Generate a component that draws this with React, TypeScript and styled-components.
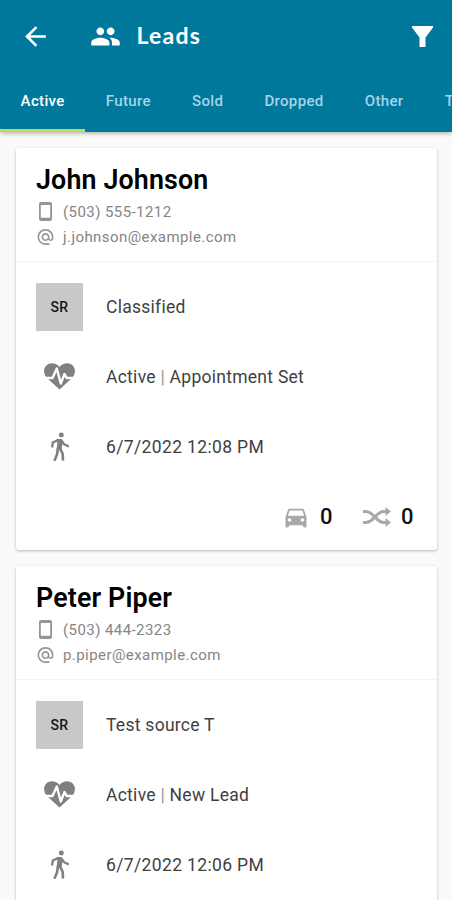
import React from 'react';
import styled, { createGlobalStyle } from 'styled-components';
import {
  MdAlternateEmail,
  MdArrowBack,
  MdDirectionsCar,
  MdPeople,
} from 'react-icons/md';

const GlobalStyle = createGlobalStyle`
  * { box-sizing: border-box; }
  body {
    margin: 0;
    background: #fafafa;
    font-family: Roboto, "Liberation Sans", sans-serif;
    overflow: hidden;
  }
`;

const Screen = styled.div`
  width: 452px;
  height: 900px;
  overflow: hidden;
  background: #fafafa;
`;

const Header = styled.header`
  height: 132px;
  background: #00789c;
  box-shadow: 0 1px 5px rgba(0, 0, 0, 0.35);
`;

const Toolbar = styled.div`
  display: flex;
  align-items: center;
  height: 72px;
  padding: 0 19px 0 20px;
  color: #fff;
`;

const PeopleIcon = styled(MdPeople)`
  margin-left: 39px;
`;

const Title = styled.h1`
  flex: 1;
  margin: 0 0 2px 15.5px;
  font: 700 23px/30px Lato, sans-serif;
  letter-spacing: 1.2px;
`;

const Tabs = styled.nav`
  display: flex;
  height: 60px;
  overflow: hidden;
`;

const Tab = styled.button<{ $active?: boolean }>`
  flex: none;
  height: 60px;
  padding: 1px 20.6px 0;
  border: 0;
  border-bottom: 3px solid ${(p) => (p.$active ? '#c5d94c' : 'transparent')};
  background: none;
  color: ${(p) => (p.$active ? '#fff' : '#a6d3e8')};
  font: 500 15px/20px Roboto, sans-serif;
  letter-spacing: 0.34px;
`;

const List = styled.main`
  display: flex;
  flex-direction: column;
  gap: 16px;
  padding: 16px 15px 0 16px;
`;

const Card = styled.article`
  height: 402px;
  flex: none;
  border-radius: 3px;
  background: #fff;
  box-shadow: 0 1px 3px rgba(0, 0, 0, 0.28);
`;

const CardHead = styled.div`
  height: 114px;
  padding: 16px 20px 0;
  border-bottom: 1px solid #f3f3f3;
`;

const Name = styled.h2`
  margin: 0 0 2px;
  color: #000;
  font-size: 26.8px;
  font-weight: 600;
  line-height: 33px;
  letter-spacing: 0.15px;
`;

const Contact = styled.div`
  display: flex;
  align-items: center;
  height: 25px;
  color: #858585;
  font-size: 15px;
  letter-spacing: 0.43px;
`;

const ContactIcon = styled.span`
  display: flex;
  justify-content: center;
  width: 19px;
  margin-right: 8px;
  color: #959595;
`;

const Details = styled.div`
  padding-top: 10px;
`;

const Row = styled.div`
  display: flex;
  align-items: center;
  height: 70px;
  padding: 0 20px;
  color: #3f3f3f;
  font-size: 17.5px;
  letter-spacing: 0.27px;
`;

const DateText = styled.span`
  letter-spacing: 0.36px;
`;

const RowIcon = styled.span`
  display: flex;
  justify-content: center;
  width: 47px;
  margin: 0 23px 1px 0;
  color: #808080;
`;

const Source = styled.span`
  display: grid;
  place-items: center;
  width: 47px;
  height: 48px;
  margin-right: 23px;
  background: #c8c8c8;
  color: #151515;
  font-size: 14px;
  font-weight: 500;
`;

const Divider = styled.span`
  color: #999;
`;

const Counts = styled.div`
  display: flex;
  align-items: center;
  justify-content: flex-end;
  height: 70px;
  padding: 0 23.5px 1px 0;
  color: #a8a8a8;
`;

const Count = styled.span`
  margin-left: 10px;
  color: #111;
  font-size: 22px;
  font-weight: 500;

  &:not(:last-child) {
    margin: 0 30.5px 0 10px;
  }
`;

const FunnelIcon = () => (
  <svg width="21" height="21" viewBox="0 0 21 21">
    <path d="M0 0h21v1.500L13.500 11.500V21H7.500V11.500L0 1.500z" fill="currentColor" />
  </svg>
);

const PhoneIcon = () => (
  <svg width="13" height="19" viewBox="0 0 13 19">
    <path
      fillRule="evenodd"
      d="M2 0h9q2 0 2 2v15q0 2-2 2H2q-2 0-2-2V2q0-2 2-2zM1.800 3v12.700h9.400V3z"
      fill="currentColor"
    />
  </svg>
);

const HeartIcon = () => (
  <svg width="31" height="27" viewBox="0 0 31 27">
    <path
      d="M15.500 26.500L3.200 15.200C-.8 11.400-.8 5.500 2.300 2.500 5.800-.8 12.200-.4 15.500 4 18.800-.4 25.200-.8 28.700 2.500c3.100 3 3.100 8.900-.9 12.700z"
      fill="currentColor"
    />
    <path
      d="M1 15h7.500L12.800 5.500l4 15 3.700-9.500 2.200 4H30"
      fill="none"
      stroke="#fff"
      strokeWidth="2.400"
      strokeLinejoin="round"
    />
  </svg>
);

const WalkIcon = () => (
  <svg width="18" height="29" viewBox="63 248 54 88" fill="none" stroke="currentColor">
    <circle cx="94" cy="257" r="7.500" fill="currentColor" stroke="none" />
    <path d="M80 269h15l3 9-3 22H80l2-21z" fill="currentColor" stroke="none" />
    <path d="M86 272l-18 8-2 15M94 273l8 12 15 7" strokeWidth="7" />
    <path d="M84 296l-3 20-8 19M89 296l9 18 1 21" strokeWidth="8" />
  </svg>
);

const ShuffleIcon = () => (
  <svg width="28" height="20" viewBox="0 0 28 20" fill="none">
    <path
      d="M0 4.500h3c7.500 0 10.500 11 17.500 11H23M0 15.500h3c7.500 0 10.500-11 17.500-11H23"
      stroke="currentColor"
      strokeWidth="3"
    />
    <path d="M22.500 0l5.500 4.500-5.500 4.500zM22.500 11l5.500 4.500-5.500 4.500z" fill="currentColor" />
  </svg>
);

interface Lead {
  name: string;
  phone: string;
  email: string;
  source: string;
  status: string;
  date: string;
}

const leads: Lead[] = [
  {
    name: 'John Johnson',
    phone: '(503) 555-1212',
    email: 'j.johnson@example.com',
    source: 'Classified',
    status: 'Appointment Set',
    date: '6/7/2022 12:08 PM',
  },
  {
    name: 'Peter Piper',
    phone: '(503) 444-2323',
    email: 'p.piper@example.com',
    source: 'Test source T',
    status: 'New Lead',
    date: '6/7/2022 12:06 PM',
  },
];

const tabs = ['Active', 'Future', 'Sold', 'Dropped', 'Other', 'T'];

const LeadCard = ({ lead }: { lead: Lead }) => (
  <Card>
    <CardHead>
      <Name>{lead.name}</Name>
      <Contact>
        <ContactIcon><PhoneIcon /></ContactIcon>
        {lead.phone}
      </Contact>
      <Contact>
        <ContactIcon><MdAlternateEmail size={20} /></ContactIcon>
        {lead.email}
      </Contact>
    </CardHead>
    <Details>
      <Row><Source>SR</Source>{lead.source}</Row>
      <Row>
        <RowIcon><HeartIcon /></RowIcon>
        <span>Active <Divider>|</Divider> {lead.status}</span>
      </Row>
      <Row>
        <RowIcon><WalkIcon /></RowIcon>
        <DateText>{lead.date}</DateText>
      </Row>
      <Counts>
        <MdDirectionsCar size={28} />
        <Count>0</Count>
        <ShuffleIcon />
        <Count>0</Count>
      </Counts>
    </Details>
  </Card>
);

export default function App() {
  return (
    <Screen>
      <GlobalStyle />
      <Header>
        <Toolbar>
          <MdArrowBack size={31} />
          <PeopleIcon size={31} />
          <Title>Leads</Title>
          <FunnelIcon />
        </Toolbar>
        <Tabs>
          {tabs.map((t, i) => <Tab key={t} $active={i === 0}>{t}</Tab>)}
        </Tabs>
      </Header>
      <List>
        {leads.map((lead) => <LeadCard key={lead.name} lead={lead} />)}
      </List>
    </Screen>
  );
}
